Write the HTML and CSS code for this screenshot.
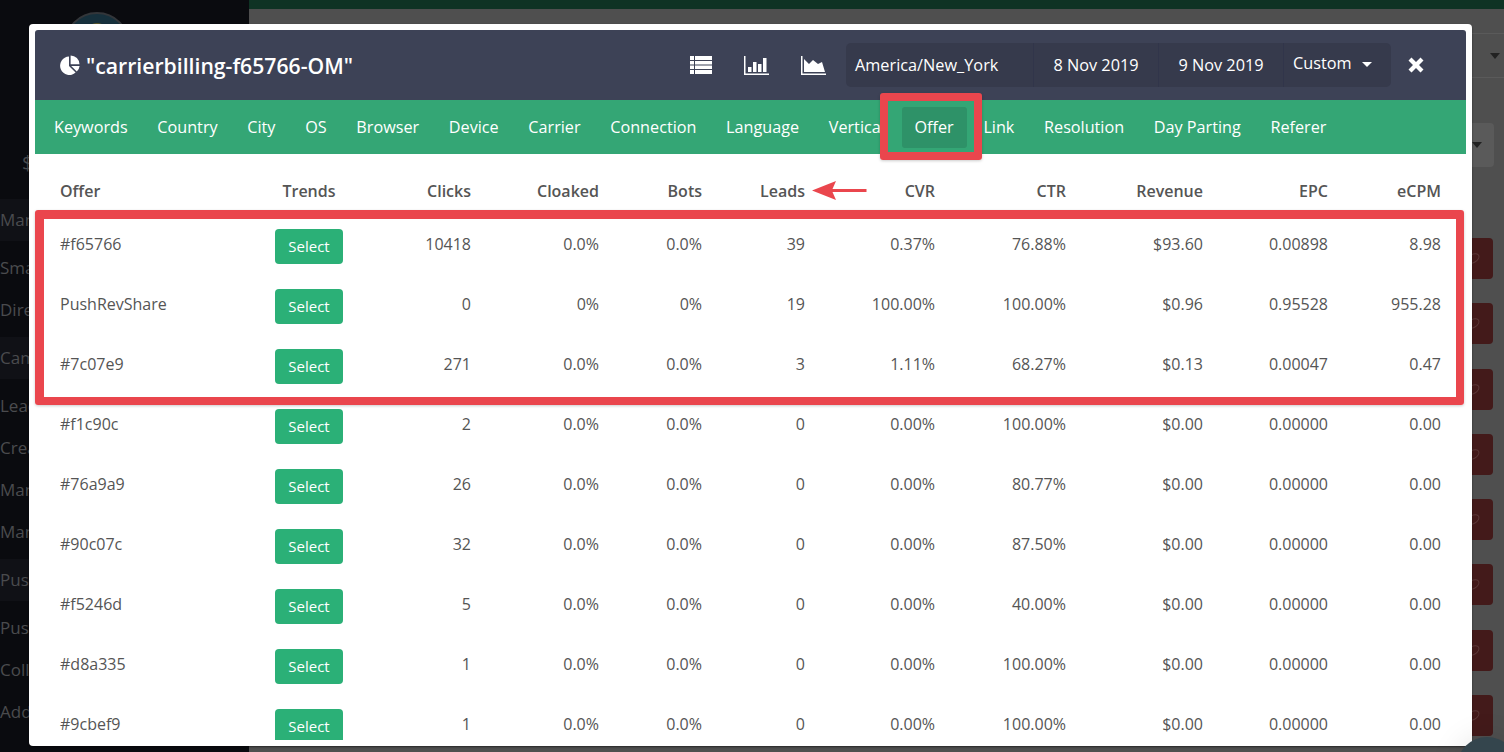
FILE: index.html
```html
<!DOCTYPE html>
<html>
<head>
<meta charset="utf-8">
<title>Campaign stats</title>
<link rel="stylesheet" href="styles.css">
</head>
<body>
<div class="screen">
<div class="page">
	<div class="sidebar">
		<div class="logo"></div>
		<div class="side-money">$</div>
		<ul class="side-menu">
			<li class="on">Manage</li>
			<li>Smart</li>
			<li>Direct</li>
			<li class="on">Camp</li>
			<li>Leads</li>
			<li>Creatives</li>
			<li>Manage</li>
			<li>Manage</li>
			<li class="on">Push</li>
			<li>Push</li>
			<li>Collect</li>
			<li>Add</li>
		</ul>
	</div>
	<div class="main">
		<div class="topbar"></div>
		<div class="filter-row"><span class="caret"></span></div>
		<div class="filter-box"><span class="caret"></span></div>
		<div class="row-btns">
			<span></span><span></span><span></span><span></span><span></span><span></span><span></span><span></span>
		</div>
	</div>
</div>

<div class="modal">
	<div class="modal-head">
		<h1 class="modal-title">
			<svg class="pie" viewBox="0 0 20 20"><path d="M9 1.600v9.300l6.600 6.600A9.200 9.200 0 1 1 9 1.600z"/><path d="M10.600 0.400a9 9 0 0 1 8.900 8.900h-8.900z"/><path d="M11.200 11h8.400a9 9 0 0 1-2.800 5.600z"/></svg>
			"carrierbilling-f65766-OM"
		</h1>
		<div class="head-tools">
			<svg class="tool tool-list" viewBox="0 0 22 18"><path d="M0 0h4v4H0zM5 0h17v4H5zM0 5h4v3.500H0zM5 5h17v3.500H5zM0 9.500h4V13H0zM5 9.500h17V13H5zM0 14h4v4H0zM5 14h17v4H5z"/></svg>
			<svg class="tool tool-bar" viewBox="0 0 25 19"><path d="M0 0h1.500v17.500H25V19H0zM4 11h3.500v5H4zM9 6h3.500v10H9zM14 8h3.500v8H14zM19 2h3.500v14H19z"/></svg>
			<svg class="tool tool-area" viewBox="0 0 25 19"><path d="M0 0h1.500v17.500H25V19H0zM3 16V3l5 5 4-4 5 4 4-2 3 10z"/></svg>
		</div>
		<div class="range">
			<div class="range-cell range-tz">America/New_York</div>
			<div class="range-cell">8 Nov 2019</div>
			<div class="range-cell">9 Nov 2019</div>
			<div class="range-cell range-pick">Custom <span class="range-caret"></span></div>
		</div>
		<svg class="close" viewBox="0 0 16 16"><path d="M3.500 0.500 8 5l4.500-4.500 3 3L11 8l4.500 4.500-3 3L8 11l-4.500 4.500-3-3L5 8 0.500 3.500z"/></svg>
	</div>
	<ul class="modal-nav">
		<li>Keywords</li>
		<li>Country</li>
		<li>City</li>
		<li>OS</li>
		<li>Browser</li>
		<li>Device</li>
		<li>Carrier</li>
		<li>Connection</li>
		<li>Language</li>
		<li>Vertical</li>
		<li class="active">Offer</li>
		<li>Link</li>
		<li>Resolution</li>
		<li>Day Parting</li>
		<li>Referer</li>
	</ul>
	<div class="modal-body">
		<table class="stats">
			<thead>
				<tr>
					<th>Offer</th><th>Trends</th><th>Clicks</th><th>Cloaked</th><th>Bots</th><th>Leads</th><th>CVR</th><th>CTR</th><th>Revenue</th><th>EPC</th><th>eCPM</th>
				</tr>
			</thead>
			<tbody>
				<tr><td>#f65766</td><td><a class="btn-select">Select</a></td><td>10418</td><td>0.0%</td><td>0.0%</td><td>39</td><td>0.37%</td><td>76.88%</td><td>$93.60</td><td>0.00898</td><td>8.98</td></tr>
				<tr><td>PushRevShare</td><td><a class="btn-select">Select</a></td><td>0</td><td>0%</td><td>0%</td><td>19</td><td>100.00%</td><td>100.00%</td><td>$0.96</td><td>0.95528</td><td>955.28</td></tr>
				<tr><td>#7c07e9</td><td><a class="btn-select">Select</a></td><td>271</td><td>0.0%</td><td>0.0%</td><td>3</td><td>1.11%</td><td>68.27%</td><td>$0.13</td><td>0.00047</td><td>0.47</td></tr>
				<tr><td>#f1c90c</td><td><a class="btn-select">Select</a></td><td>2</td><td>0.0%</td><td>0.0%</td><td>0</td><td>0.00%</td><td>100.00%</td><td>$0.00</td><td>0.00000</td><td>0.00</td></tr>
				<tr><td>#76a9a9</td><td><a class="btn-select">Select</a></td><td>26</td><td>0.0%</td><td>0.0%</td><td>0</td><td>0.00%</td><td>80.77%</td><td>$0.00</td><td>0.00000</td><td>0.00</td></tr>
				<tr><td>#90c07c</td><td><a class="btn-select">Select</a></td><td>32</td><td>0.0%</td><td>0.0%</td><td>0</td><td>0.00%</td><td>87.50%</td><td>$0.00</td><td>0.00000</td><td>0.00</td></tr>
				<tr><td>#f5246d</td><td><a class="btn-select">Select</a></td><td>5</td><td>0.0%</td><td>0.0%</td><td>0</td><td>0.00%</td><td>40.00%</td><td>$0.00</td><td>0.00000</td><td>0.00</td></tr>
				<tr><td>#d8a335</td><td><a class="btn-select">Select</a></td><td>1</td><td>0.0%</td><td>0.0%</td><td>0</td><td>0.00%</td><td>100.00%</td><td>$0.00</td><td>0.00000</td><td>0.00</td></tr>
				<tr><td>#9cbef9</td><td><a class="btn-select">Select</a></td><td>1</td><td>0.0%</td><td>0.0%</td><td>0</td><td>0.00%</td><td>100.00%</td><td>$0.00</td><td>0.00000</td><td>0.00</td></tr>
			</tbody>
		</table>
	</div>

	<!-- annotations drawn on the screenshot -->
	<div class="mark mark-offer"></div>
	<div class="mark mark-rows"></div>
	<svg class="mark-arrow" viewBox="0 0 55 21"><path d="M0 10.500 24 1l-3.500 8H54.500v3H20.500l3.500 8z"/></svg>
</div>

<div class="chat-bubble"></div>
</div>
</body>
</html>
```

FILE: styles.css
```css
html, body { margin: 0; padding: 0; height: 100%; overflow: hidden; }
body { background: #4f4f4f; font-family: "Open Sans", "Liberation Sans", sans-serif; color: #555; }
ul { list-style: none; margin: 0; padding: 0; }
.screen { position: relative; width: 1504px; height: 752px; overflow: hidden; }

/* page behind the overlay */
.page { display: flex; height: 752px; overflow: hidden; }
.sidebar { width: 249px; background: #0a0b0f; color: #4a4b4e; font-size: 17px; overflow: hidden; }
.logo { width: 66px; height: 66px; margin: 12px 0 0 64px; border-radius: 50%; background: radial-gradient(circle at 50% 45%, #8a7420 0 18px, #16303c 19px); border: 2px solid #33363a; box-sizing: border-box; }
.side-money { margin: 71px 0 0 22px; font-size: 20px; line-height: 27px; height: 50px; }
.side-menu li { height: 42px; line-height: 42px; white-space: nowrap; }
.side-menu li.on { background: #101116; margin: 6px 0; }
.side-menu li:first-child { margin-top: 0; }
.main { flex: 1; overflow: hidden; }
.topbar { height: 9px; background: #0f3324; }
.filter-row { height: 43px; margin-top: 24px; border-top: 1px solid #5a5a5a; border-bottom: 1px solid #5a5a5a; display: flex; justify-content: flex-end; align-items: center; padding-right: 4px; }
.filter-box { width: 22px; height: 44px; margin: 45px 10px 0 auto; background: #5a5a5a; border-radius: 0 4px 4px 0; display: flex; align-items: center; }
.caret { border: 5px solid transparent; border-top: 6px solid #222; border-bottom: 0; }
.row-btns { display: flex; flex-direction: column; gap: 24.300px; align-items: flex-end; margin-top: 71px; padding-right: 11px; }
.row-btns span { flex: none; width: 40px; height: 41px; background: #431a1a; border-radius: 4px; display: flex; }
.row-btns span::after { content: ""; width: 12px; height: 7px; margin: auto; border: 1px solid rgba(255,255,255,.13); border-radius: 50%; transform: rotate(-30deg); }

.chat-bubble { position: absolute; right: -13px; bottom: -45px; width: 60px; height: 60px; border-radius: 50%; background: #34454d; box-shadow: 0 0 30px rgba(0,0,0,.1); }

/* modal */
.modal { position: absolute; left: 29px; top: 24px; width: 1443px; height: 722px; box-sizing: border-box; padding: 6px; background: #fff; border-radius: 4px; box-shadow: 0 1px 2px rgba(0,0,0,.5); display: flex; flex-direction: column; }
.modal-head { height: 70px; flex: none; background: #3d4256; border-radius: 3px 3px 0 0; display: flex; align-items: center; padding-left: 25px; color: #fff; }
.modal-title { margin: 0; font-size: 21.200px; font-weight: 600; display: flex; align-items: center; gap: 6px; width: 630px; white-space: nowrap; }
.pie { width: 20px; height: 20px; fill: #fff; flex: none; }
.head-tools { display: flex; align-items: center; gap: 32px; margin-right: 20px; }
.tool { fill: #fff; display: block; }
.tool-list { width: 22px; height: 18px; }
.tool-bar, .tool-area { width: 25px; height: 19px; }
.range { width: 545px; height: 44px; background: #363a4c; border-radius: 5px; display: flex; font-size: 16.300px; }
.range-cell { width: 125px; line-height: 44px; text-align: center; border-left: 1px solid #31354a; box-sizing: border-box; white-space: nowrap; }
.range-tz { width: 187px; text-align: left; padding-left: 9px; border-left: 0; }
.range-pick { width: 108px; line-height: 40px; text-align: left; padding-left: 9px; }
.range-caret { display: inline-block; margin-left: 6px; vertical-align: middle; border: 5px solid transparent; border-top: 5px solid #fff; border-bottom: 0; }
.close { width: 16px; height: 16px; margin-left: 17px; fill: #fff; }

.modal-nav { height: 54px; flex: none; background: #34a675; display: flex; align-items: center; gap: 3.700px; padding-left: 6px; color: #fff; font-size: 16.200px; }
.modal-nav li { height: 41px; line-height: 41px; padding: 0 13px; border-radius: 3px; white-space: nowrap; }
.modal-nav li.active { background: #2e9268; }

.modal-body { flex: 1; overflow: hidden; }
.stats { table-layout: fixed; width: 1381px; margin-left: 25px; border-collapse: collapse; font-size: 16px; }
.stats th { height: 61px; font-weight: 600; text-align: right; padding: 13px 0 0; box-sizing: border-box; }
.stats td { height: 60px; text-align: right; padding: 0 0 2px; box-sizing: border-box; }
.stats th:nth-child(1), .stats td:nth-child(1) { width: 215px; text-align: left; }
.stats th:nth-child(2), .stats td:nth-child(2) { width: 68px; text-align: center; }
.stats th:nth-child(3), .stats th:nth-child(4) { width: 128px; }
.stats th:nth-child(5), .stats th:nth-child(6) { width: 103px; }
.stats th:nth-child(7) { width: 130px; }
.stats th:nth-child(8) { width: 131px; }
.stats th:nth-child(9) { width: 137px; }
.stats th:nth-child(10) { width: 125px; }
.stats th:nth-child(11) { width: 113px; }
.btn-select { display: block; height: 35px; line-height: 35px; margin-top: 5px; background: #2bb077; color: #fff; border-radius: 4px; font-size: 15px; text-align: center; }

/* red annotations */
.mark { position: absolute; box-sizing: border-box; border: 8px solid #ea464d; border-radius: 3px; box-shadow: 0 1px 3px rgba(0,0,0,.2); }
.mark-offer { left: 851px; top: 69px; width: 102px; height: 67px; }
.mark-rows { left: 6px; top: 186px; width: 1429px; height: 195px; border-width: 9px 8px 8px 9px; }
.mark-arrow { position: absolute; left: 783px; top: 156px; width: 55px; height: 21px; fill: #ea464d; }
```
